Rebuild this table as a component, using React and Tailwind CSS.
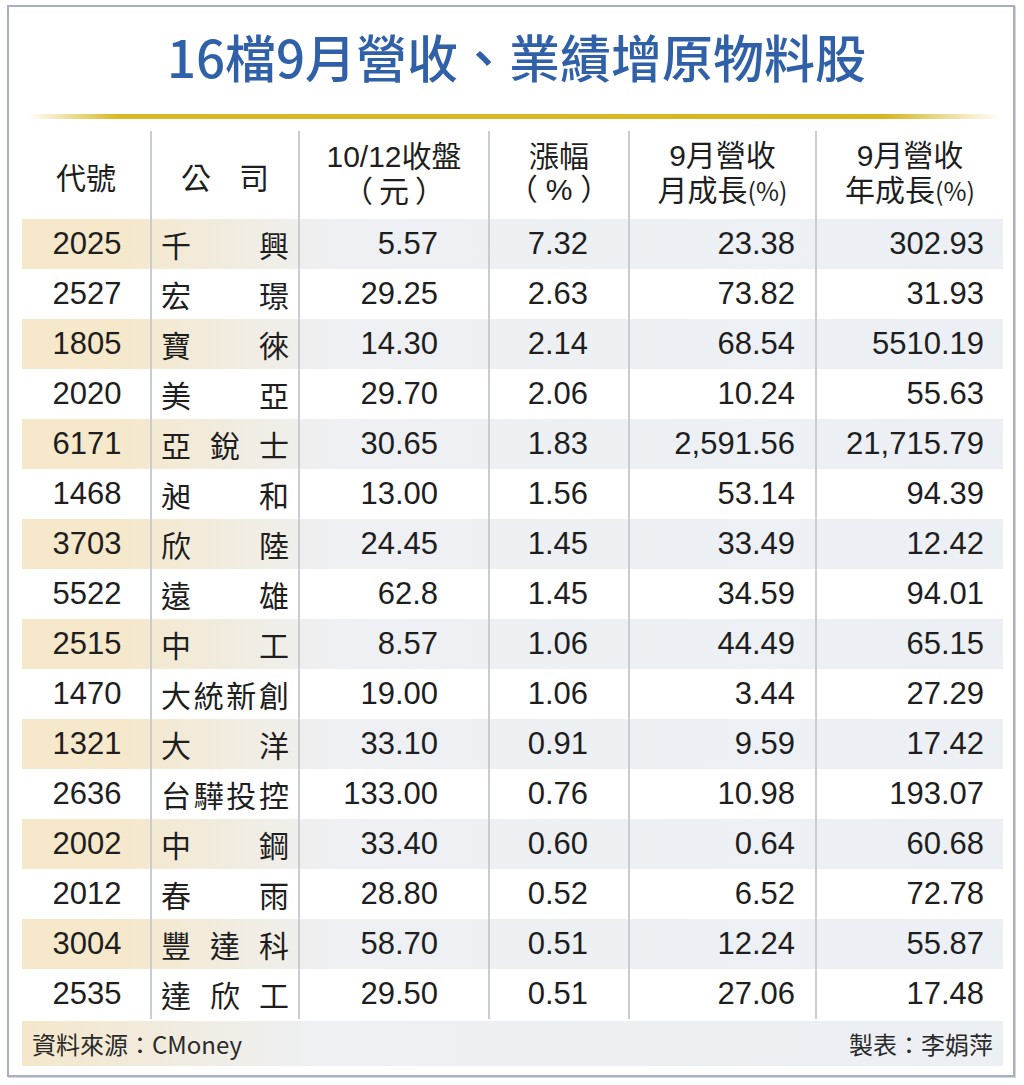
const rows = [
  ['2025', '千興', '5.57', '7.32', '23.38', '302.93'],
  ['2527', '宏璟', '29.25', '2.63', '73.82', '31.93'],
  ['1805', '寶徠', '14.30', '2.14', '68.54', '5510.19'],
  ['2020', '美亞', '29.70', '2.06', '10.24', '55.63'],
  ['6171', '亞銳士', '30.65', '1.83', '2,591.56', '21,715.79'],
  ['1468', '昶和', '13.00', '1.56', '53.14', '94.39'],
  ['3703', '欣陸', '24.45', '1.45', '33.49', '12.42'],
  ['5522', '遠雄', '62.8', '1.45', '34.59', '94.01'],
  ['2515', '中工', '8.57', '1.06', '44.49', '65.15'],
  ['1470', '大統新創', '19.00', '1.06', '3.44', '27.29'],
  ['1321', '大洋', '33.10', '0.91', '9.59', '17.42'],
  ['2636', '台驊投控', '133.00', '0.76', '10.98', '193.07'],
  ['2002', '中鋼', '33.40', '0.60', '0.64', '60.68'],
  ['2012', '春雨', '28.80', '0.52', '6.52', '72.78'],
  ['3004', '豐達科', '58.70', '0.51', '12.24', '55.87'],
  ['2535', '達欣工', '29.50', '0.51', '27.06', '17.48'],
]

const cols = 'grid grid-cols-[128px_148px_190px_140px_187px_188px]'
const divider = 'border-l-2 border-[#c9ccd2]'

// header cell with two stacked lines
function Head({ top, bottom }) {
  return (
    <div className={`${divider} flex flex-col items-center justify-center pb-[6px] leading-[33px]`}>
      <span>{top}</span>
      <span>{bottom}</span>
    </div>
  )
}

export default function App() {
  return (
    <div className="w-[1024px] h-[1085px] bg-white pt-[5px] pl-[7px] font-['Liberation_Sans','Noto_Sans_CJK_TC',sans-serif] text-[#1e1e1e]">
      <div className="w-[1008px] h-[1072px] border-2 border-[#a9b0c0] shadow-[1px_1px_0_#d5d8df] flex flex-col pl-[13px]">
        <h1 className="pt-[21px] text-center pr-[2px] text-[51px] leading-[56px] font-medium text-[#2f60a8] font-['Noto_Sans_CJK_TC',sans-serif]">
          16檔9月營收、業績增原物料股
        </h1>

        <div className="mt-[30px] ml-[6px] w-[972px] h-[5px] bg-[linear-gradient(to_right,#ffffff00,#d9b928_9%,#d6b520_88%,#ffffff00)]" />

        <div className="mt-[12px] w-[981px]">
          <div className={`${cols} h-[88px] text-[30px] font-['Noto_Sans_CJK_TC',sans-serif]`}>
            <div className="flex items-center justify-center pt-[2px]">代號</div>
            <div className={`${divider} flex items-center justify-center gap-[28px] pt-[2px]`}>
              <span>公</span>
              <span>司</span>
            </div>
            <Head
              top={<span className="font-['Liberation_Sans','Noto_Sans_CJK_TC',sans-serif]">10/12收盤</span>}
              bottom={<span>（<span className="mx-[6px]">元</span>）</span>}
            />
            <Head top="漲幅" bottom={<span>（<span className="mx-[8px] font-['Liberation_Sans',sans-serif]">%</span>）</span>} />
            <Head
              top={<span className="font-['Liberation_Sans','Noto_Sans_CJK_TC',sans-serif]">9月營收</span>}
              bottom={<span>月成長<span className="text-[25px]">(%)</span></span>}
            />
            <Head
              top={<span className="font-['Liberation_Sans','Noto_Sans_CJK_TC',sans-serif]">9月營收</span>}
              bottom={<span>年成長<span className="text-[25px]">(%)</span></span>}
            />
          </div>

          {rows.map((r, i) => (
            <div
              key={r[0]}
              className={`${cols} h-[50px] text-[31px] leading-[50px] ${
                i % 2 === 0
                  ? 'bg-linear-to-r from-[#f5e8cb] from-10% via-[#eef0f3] via-32% to-[#ecf0f4]'
                  : 'bg-white'
              }`}
            >
              <div className="text-center pl-[2px]">{r[0]}</div>
              <div className={`${divider} flex justify-between pl-[9px] pr-[9px] text-[30px] font-['Noto_Sans_CJK_TC',sans-serif]`}>
                {[...r[1]].map((c, j) => (
                  <span key={j}>{c}</span>
                ))}
              </div>
              <div className={`${divider} text-right pr-[50px]`}>{r[2]}</div>
              <div className={`${divider} text-right pr-[40px]`}>{r[3]}</div>
              <div className={`${divider} text-right pr-[20px]`}>{r[4]}</div>
              <div className={`${divider} text-right pr-[19px]`}>{r[5]}</div>
            </div>
          ))}

          <div className="mt-[2px] h-[45px] flex items-center justify-between px-[10px] text-[24px] text-[#2a2a2a] bg-linear-to-r from-[#f4e7cb] via-[#eef0f3] via-30% to-[#eceff3] font-['Noto_Sans_CJK_TC',sans-serif]">
            <span>資料來源：CMoney</span>
            <span>製表：李娟萍</span>
          </div>
        </div>
      </div>
    </div>
  )
}
